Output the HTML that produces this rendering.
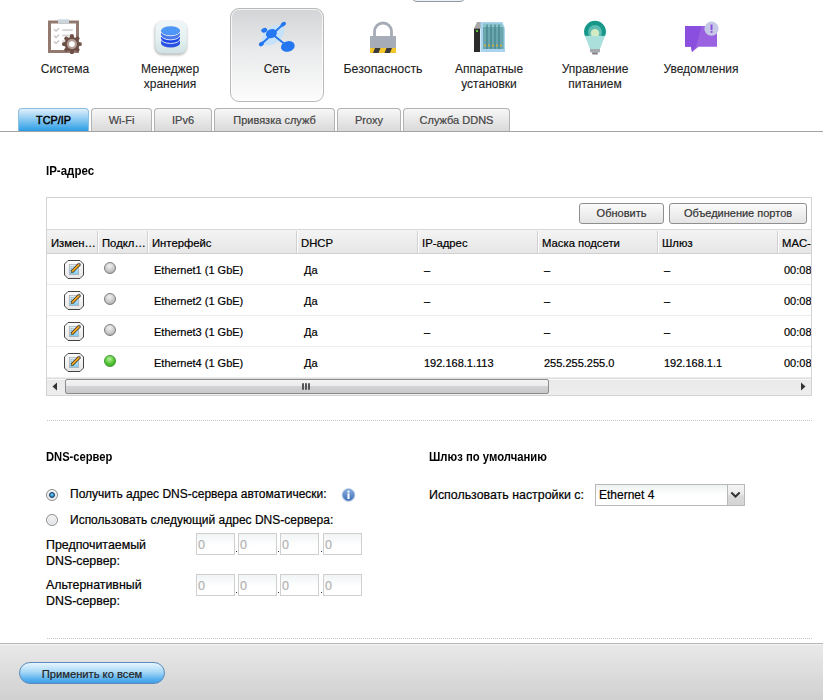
<!DOCTYPE html>
<html><head><meta charset="utf-8">
<style>
*{box-sizing:border-box;margin:0;padding:0}
html,body{width:823px;height:700px;overflow:hidden;background:#fff}
body{position:relative;font-family:"Liberation Sans",sans-serif;color:#000;-webkit-text-stroke:0.2px currentColor}
.a{position:absolute}
.lbl{position:absolute;font-size:12px;line-height:15px;text-align:center;color:#222;white-space:nowrap;-webkit-text-stroke:0.1px currentColor}
.card{position:absolute;left:230px;top:8px;width:94px;height:94px;border:1px solid #b9b9b9;border-radius:9px;background:linear-gradient(#d3d4d7,#e9eaeb 45%,#fcfcfc);box-shadow:inset 0 0 0 1px rgba(255,255,255,.75)}
.topbtn{position:absolute;left:411px;top:-20px;width:55px;height:22px;border:1px solid #8f9ba6;border-radius:6px;background:#eef1f4}
.tabline{position:absolute;left:0;top:131px;width:823px;height:1px;background:#a3a3a3}
.tab{position:absolute;top:108px;height:23px;border:1px solid #b3b3b3;border-bottom:none;border-radius:4px 4px 0 0;background:linear-gradient(#f7f7f7,#d9d9d9);font-size:11px;line-height:22px;text-align:center;color:#444}
.tab.on{background:linear-gradient(#dff0fb,#2b9de6);border-color:#8fbfe0;color:#000;font-size:10.8px;-webkit-text-stroke:0.45px #000}
.h{position:absolute;font-size:11.5px;font-weight:bold;color:#000;white-space:nowrap;transform:scaleY(1.14);transform-origin:0 85%;-webkit-text-stroke:0}
.grid{position:absolute;left:46px;top:197px;width:766px;height:199px;border:1px solid #d3d3d3;overflow:hidden}
.btn{position:absolute;top:5px;height:21px;border:1px solid #8f8f8f;border-radius:3px;background:linear-gradient(#fbfbfb,#e4e4e4);font-size:11px;line-height:19px;text-align:center;color:#333}
.hdr{position:absolute;left:0;top:31px;width:900px;height:25px;background:linear-gradient(#f4f4f4,#e6e6e6);border-top:1px solid #d8d8d8;border-bottom:1px solid #d0d0d0}
.hc{position:absolute;top:1px;height:22px;font-size:11.3px;line-height:24px;color:#000;padding-left:4px;white-space:nowrap;overflow:hidden;border-right:1px solid #d0d0d0;box-shadow:1px 0 0 #fff}
.row{position:absolute;left:0;width:900px;height:31px;border-bottom:1px solid #ececec}
.c{position:absolute;top:0;font-size:11px;line-height:32px;color:#000;white-space:nowrap}
.edit{position:absolute;left:17px;top:6px}
.dot{position:absolute;left:57px;top:8px;width:12px;height:12px;border-radius:50%;border:1px solid #7d7d7d;background:radial-gradient(circle at 45% 30%,#f2f2f2,#c9c9c9 55%,#9a9a9a 100%)}
.dot.g{border-color:#3a9a2a;background:radial-gradient(circle at 45% 30%,#b5f29a,#52c234 55%,#2e9a1e 100%)}
.dotted{position:absolute;left:47px;width:765px;height:1px;border-top:1px dotted #c4c4c4}
.txt{position:absolute;font-size:12px;color:#000;white-space:nowrap}
.radio{position:absolute;left:46px;width:12px;height:12px;border-radius:50%;border:1px solid #8a8a8a;box-shadow:inset 0 0 0 1px #fdfdfd;background:radial-gradient(circle at 50% 35%,#f4f4f5,#d3d5d9)}
.ipb{position:absolute;width:39px;height:22px;border:1px solid #cfcfcf;background:linear-gradient(#f1f4f5,#fff 60%);font-size:12.5px;line-height:22px;padding-left:1px;color:#b3b3b3}
.ipdot{position:absolute;width:1px;height:1px;background:#333}
.footer{position:absolute;left:0;top:643px;width:823px;height:57px;border-top:1px solid #b5b5b5;box-shadow:inset 0 1px 0 #f4f4f4;background:linear-gradient(#e9e9e9,#d0d0d0)}
.apply{position:absolute;left:19px;top:662px;width:146px;height:22px;border:1px solid #5a8bbd;border-radius:11px;background:linear-gradient(#e8f6fe,#a6d8f6 45%,#5ab2ee 80%,#3f9fe6);font-size:11.2px;line-height:22px;text-align:center;color:#222}
</style></head><body>

<div class="topbtn"></div>
<div class="card"></div>

<!-- Система -->
<svg class="a" style="left:44px;top:16px" width="42" height="40" viewBox="0 0 42 40">
  <rect x="5.5" y="6" width="28" height="29.5" fill="#fff" stroke="#937a70" stroke-width="3"/>
  <rect x="14" y="3.3" width="11" height="4.2" fill="#c9d6dd"/>
  <path d="M10 13.2l2 2 3-3M10 19.7l2 2 3-3M10 25.5l2 2 3-3" stroke="#bdbdbd" stroke-width="1.2" fill="none"/>
  <rect x="18.3" y="13.1" width="10.5" height="2" fill="#d6d6d6"/><rect x="18.3" y="18.5" width="10.5" height="2" fill="#d6d6d6"/><rect x="18.3" y="24.3" width="4" height="2" fill="#d6d6d6"/>
  <g transform="translate(27.9,28.1)">
    <path d="M-2.41 -6.36 L-1.46 -9.79 L1.46 -9.79 L2.41 -6.36 L2.79 -6.20 L5.89 -7.96 L7.96 -5.89 L6.20 -2.79 L6.36 -2.41 L9.79 -1.46 L9.79 1.46 L6.36 2.41 L6.20 2.79 L7.96 5.89 L5.89 7.96 L2.79 6.20 L2.41 6.36 L1.46 9.79 L-1.46 9.79 L-2.41 6.36 L-2.79 6.20 L-5.89 7.96 L-7.96 5.89 L-6.20 2.79 L-6.36 2.41 L-9.79 1.46 L-9.79 -1.46 L-6.36 -2.41 L-6.20 -2.79 L-7.96 -5.89 L-5.89 -7.96 L-2.79 -6.20Z" fill="#6d4f46"/>
    <circle r="6.9" fill="#6d4f46"/>
    <circle r="5.1" fill="#b5a098"/><circle r="2.9" fill="#fff"/>
  </g>
</svg>

<!-- Менеджер хранения -->
<svg class="a" style="left:150px;top:18px" width="42" height="42" viewBox="0 0 42 42">
  <defs><linearGradient id="sq" x1="0" y1="0" x2="0" y2="1"><stop offset="0" stop-color="#f1f7f9"/><stop offset="0.6" stop-color="#e3eff1"/><stop offset="1" stop-color="#cfe1e4"/></linearGradient>
  <filter id="bl" x="-20%" y="-20%" width="140%" height="140%"><feGaussianBlur stdDeviation="0.9"/></filter></defs>
  <rect x="4.5" y="3.8" width="32.5" height="33.5" rx="8" fill="#b9b9b9" filter="url(#bl)"/>
  <rect x="5.3" y="3.1" width="31.5" height="32.5" rx="7.5" fill="url(#sq)"/>
  <g transform="translate(2,2)">
  <path d="M9.1 10.5V23.15a9.45 4.35 0 0 0 18.9 0V10.5z" fill="#2b53e2"/>
  <path d="M9.1 10.5V18.95a9.45 4.35 0 0 0 18.9 0V10.5z" fill="#1b47e6"/>
  <path d="M9.1 10.5V15.35a9.45 4.35 0 0 0 18.9 0V10.5z" fill="#4b79e8"/>
  <path d="M9.1 11.4a9.45 4.35 0 0 0 18.9 0M9.1 15.5a9.45 4.35 0 0 0 18.9 0M9.1 19.1a9.45 4.35 0 0 0 18.9 0" stroke="#eef3fc" stroke-width="0.9" fill="none"/>
  <ellipse cx="18.55" cy="10.55" rx="9.45" ry="4.35" fill="#4e97f7"/>
  </g>
</svg>

<!-- Сеть -->
<svg class="a" style="left:250px;top:15px" width="50" height="45" viewBox="0 0 50 45">
  <ellipse cx="23.1" cy="20.1" rx="13" ry="8" transform="rotate(-40 23.1 20.1)" fill="#c6e2fb"/>
  <path d="M11.4 29L33.3 9.2M21.4 18.6L37.8 31.4" stroke="#2477f0" stroke-width="1.9" fill="none"/>
  <ellipse cx="21.4" cy="18.6" rx="5.6" ry="4.4" transform="rotate(-20 21.4 18.6)" fill="#2477f0"/>
  <ellipse cx="14.2" cy="15.3" rx="3" ry="2.3" transform="rotate(-20 14.2 15.3)" fill="#2477f0"/>
  <ellipse cx="33.3" cy="9.2" rx="3" ry="2" transform="rotate(-35 33.3 9.2)" fill="#2477f0"/>
  <ellipse cx="11.4" cy="29" rx="2.8" ry="2" transform="rotate(-35 11.4 29)" fill="#2477f0"/>
  <ellipse cx="37.8" cy="31.4" rx="7" ry="5.2" transform="rotate(-15 37.8 31.4)" fill="#2477f0"/>
</svg>

<!-- Безопасность -->
<svg class="a" style="left:368px;top:20px" width="30" height="35" viewBox="0 0 30 35">
  <path d="M6.5 16.5V11.5a8.5 8.5 0 0 1 17 0v5" stroke="#a6acb6" stroke-width="2.8" fill="none"/>
  <rect x="2" y="16" width="26" height="12" fill="#a7adb8"/>
  <rect x="2" y="28" width="26" height="5" fill="#f3c72b"/>
  <path d="M5 33l2-5h5.5l-2 5zM16.5 33l2-5h5.5l-2 5z" fill="#3a3a3a"/>
</svg>

<!-- Аппаратные установки -->
<svg class="a" style="left:473px;top:21px" width="33" height="32" viewBox="0 0 33 32">
  <path d="M1 7.5L4 1h4v6.5z" fill="#a8a8a8"/>
  <rect x="1" y="7.5" width="6" height="23.5" fill="#2b2b2b"/>
  <circle cx="4" cy="10" r="1" fill="#6df53b"/>
  <path d="M7.5 1h22l2.5 6.5v23.5H7.5z" fill="#a9d3ee"/>
  <path d="M10 2.5h19l1.5 4.5V28H10z" fill="#8cc4cc"/>
  <rect x="10" y="6" width="20.5" height="22" fill="#6aa6ad"/>
  <path d="M14 3.5v24.5M18 3.5v24.5M22 3.5v24.5M26 3.5v24.5" stroke="#3f7c84" stroke-width="1.1"/>
  <g fill="#e6b52c"><circle cx="12" cy="24.5" r="0.9"/><circle cx="16" cy="24.5" r="0.9"/><circle cx="20" cy="24.5" r="0.9"/><circle cx="24" cy="24.5" r="0.9"/><circle cx="28" cy="24.5" r="0.9"/></g>
</svg>

<!-- Управление питанием -->
<svg class="a" style="left:583px;top:20px" width="24" height="36" viewBox="0 0 24 36">
  <circle cx="12" cy="11.7" r="10.9" fill="#16978a"/>
  <circle cx="12" cy="11.9" r="7" fill="#5dbcb2"/>
  <circle cx="12" cy="13.3" r="4.2" fill="#d3ebc2"/>
  <path d="M0 15.9h24v8H0z" fill="#fff"/>
  <path d="M2 15.9h20l-5 13.1H7z" fill="#abdfdb"/>
  <rect x="7" y="29" width="10" height="3.3" fill="#a5a9ae"/>
  <rect x="9" y="32.3" width="6" height="2.3" rx="1" fill="#7f858b"/>
</svg>

<!-- Уведомления -->
<svg class="a" style="left:684px;top:20px" width="36" height="34" viewBox="0 0 36 34">
  <path d="M1 6h32v20.8H14.5L8 32l-1-5.2H1z" fill="#9a62e0"/>
  <path d="M1 6h16.5l-5.5 20.8L8 32l-1-5.2H1z" fill="#8a4fde"/>
  <circle cx="27.5" cy="8.7" r="7.1" fill="#c6c9e6"/>
  <rect x="26.6" y="4.5" width="1.9" height="5.5" fill="#8a4fde"/>
  <rect x="26.6" y="11" width="1.9" height="1.8" fill="#8a4fde"/>
</svg>

<div class="lbl" style="left:15px;top:62px;width:100px">Система</div>
<div class="lbl" style="left:120px;top:62px;width:100px">Менеджер<br>хранения</div>
<div class="lbl" style="left:227px;top:62px;width:100px">Сеть</div>
<div class="lbl" style="left:333px;top:62px;width:100px;font-size:12.4px">Безопасность</div>
<div class="lbl" style="left:439px;top:62px;width:100px">Аппаратные<br>установки</div>
<div class="lbl" style="left:545px;top:62px;width:100px">Управление<br>питанием</div>
<div class="lbl" style="left:651px;top:62px;width:100px">Уведомления</div>

<!-- tabs -->
<div class="tabline"></div>
<div class="tab on" style="left:18px;width:71px">TCP/IP</div>
<div class="tab" style="left:91px;width:61px">Wi-Fi</div>
<div class="tab" style="left:154px;width:58px">IPv6</div>
<div class="tab" style="left:214px;width:121px">Привязка служб</div>
<div class="tab" style="left:337px;width:64px">Proxy</div>
<div class="tab" style="left:403px;width:107px">Служба DDNS</div>

<div class="h" style="left:46px;top:165px">IP-адрес</div>

<div class="grid">
  <div class="btn" style="left:532px;width:85px">Обновить</div>
  <div class="btn" style="left:622px;width:138px">Объединение портов</div>
  <div class="hdr">
    <div class="hc" style="left:0;width:51px">Измен…</div>
    <div class="hc" style="left:51px;width:50px">Подкл…</div>
    <div class="hc" style="left:101px;width:149px">Интерфейс</div>
    <div class="hc" style="left:250px;width:121px">DHCP</div>
    <div class="hc" style="left:371px;width:120px">IP-адрес</div>
    <div class="hc" style="left:491px;width:120px">Маска подсети</div>
    <div class="hc" style="left:611px;width:120px">Шлюз</div>
    <div class="hc" style="left:731px;width:120px">MAC-адрес</div>
  </div>
  <div class="row" style="top:56px"><svg class="edit" width="20" height="19" viewBox="0 0 20 19"><defs><linearGradient id="eg0" x1="0" y1="0" x2="0" y2="1"><stop offset="0" stop-color="#fdfdfd"/><stop offset="1" stop-color="#e6e6e6"/></linearGradient><linearGradient id="bq0" x1="0" y1="0" x2="0" y2="1"><stop offset="0" stop-color="#e2f2fb"/><stop offset="1" stop-color="#7ccbf2"/></linearGradient></defs><path d="M4 0.5H16L19.5 4V15L16 18.5H4L0.5 15V4Z" fill="url(#eg0)" stroke="#444" stroke-width="1"/><rect x="5.3" y="4.6" width="9.4" height="10" fill="url(#bq0)" stroke="#a9a9a9" stroke-width="0.7"/><g fill="#999"><rect x="6.8" y="6.2" width="1" height="1"/><rect x="8.6" y="6.2" width="1" height="1"/><rect x="6.8" y="8.2" width="1" height="1"/></g><path d="M7.8 11.8L15.6 4" stroke="#222" stroke-width="3.2"/><path d="M7.8 11.8L15.6 4" stroke="#f7a820" stroke-width="1.9"/><path d="M15 4.6l1.3-1.3" stroke="#777" stroke-width="2.6"/><path d="M6.6 13.2l0.9-2.2 1.4 1.3z" fill="#6a5020"/></svg><div class="dot"></div><div class="c" style="left:107px">Ethernet1 (1 GbE)</div><div class="c" style="left:257px">Да</div><div class="c" style="left:377px">–</div><div class="c" style="left:497px">–</div><div class="c" style="left:617px">–</div><div class="c" style="left:737px">00:08:9B:00:00:01</div></div>
  <div class="row" style="top:87px"><svg class="edit" width="20" height="19" viewBox="0 0 20 19"><defs><linearGradient id="eg1" x1="0" y1="0" x2="0" y2="1"><stop offset="0" stop-color="#fdfdfd"/><stop offset="1" stop-color="#e6e6e6"/></linearGradient><linearGradient id="bq1" x1="0" y1="0" x2="0" y2="1"><stop offset="0" stop-color="#e2f2fb"/><stop offset="1" stop-color="#7ccbf2"/></linearGradient></defs><path d="M4 0.5H16L19.5 4V15L16 18.5H4L0.5 15V4Z" fill="url(#eg1)" stroke="#444" stroke-width="1"/><rect x="5.3" y="4.6" width="9.4" height="10" fill="url(#bq1)" stroke="#a9a9a9" stroke-width="0.7"/><g fill="#999"><rect x="6.8" y="6.2" width="1" height="1"/><rect x="8.6" y="6.2" width="1" height="1"/><rect x="6.8" y="8.2" width="1" height="1"/></g><path d="M7.8 11.8L15.6 4" stroke="#222" stroke-width="3.2"/><path d="M7.8 11.8L15.6 4" stroke="#f7a820" stroke-width="1.9"/><path d="M15 4.6l1.3-1.3" stroke="#777" stroke-width="2.6"/><path d="M6.6 13.2l0.9-2.2 1.4 1.3z" fill="#6a5020"/></svg><div class="dot"></div><div class="c" style="left:107px">Ethernet2 (1 GbE)</div><div class="c" style="left:257px">Да</div><div class="c" style="left:377px">–</div><div class="c" style="left:497px">–</div><div class="c" style="left:617px">–</div><div class="c" style="left:737px">00:08:9B:00:00:02</div></div>
  <div class="row" style="top:118px"><svg class="edit" width="20" height="19" viewBox="0 0 20 19"><defs><linearGradient id="eg2" x1="0" y1="0" x2="0" y2="1"><stop offset="0" stop-color="#fdfdfd"/><stop offset="1" stop-color="#e6e6e6"/></linearGradient><linearGradient id="bq2" x1="0" y1="0" x2="0" y2="1"><stop offset="0" stop-color="#e2f2fb"/><stop offset="1" stop-color="#7ccbf2"/></linearGradient></defs><path d="M4 0.5H16L19.5 4V15L16 18.5H4L0.5 15V4Z" fill="url(#eg2)" stroke="#444" stroke-width="1"/><rect x="5.3" y="4.6" width="9.4" height="10" fill="url(#bq2)" stroke="#a9a9a9" stroke-width="0.7"/><g fill="#999"><rect x="6.8" y="6.2" width="1" height="1"/><rect x="8.6" y="6.2" width="1" height="1"/><rect x="6.8" y="8.2" width="1" height="1"/></g><path d="M7.8 11.8L15.6 4" stroke="#222" stroke-width="3.2"/><path d="M7.8 11.8L15.6 4" stroke="#f7a820" stroke-width="1.9"/><path d="M15 4.6l1.3-1.3" stroke="#777" stroke-width="2.6"/><path d="M6.6 13.2l0.9-2.2 1.4 1.3z" fill="#6a5020"/></svg><div class="dot"></div><div class="c" style="left:107px">Ethernet3 (1 GbE)</div><div class="c" style="left:257px">Да</div><div class="c" style="left:377px">–</div><div class="c" style="left:497px">–</div><div class="c" style="left:617px">–</div><div class="c" style="left:737px">00:08:9B:00:00:03</div></div>
  <div class="row" style="top:149px"><svg class="edit" width="20" height="19" viewBox="0 0 20 19"><defs><linearGradient id="eg3" x1="0" y1="0" x2="0" y2="1"><stop offset="0" stop-color="#fdfdfd"/><stop offset="1" stop-color="#e6e6e6"/></linearGradient><linearGradient id="bq3" x1="0" y1="0" x2="0" y2="1"><stop offset="0" stop-color="#e2f2fb"/><stop offset="1" stop-color="#7ccbf2"/></linearGradient></defs><path d="M4 0.5H16L19.5 4V15L16 18.5H4L0.5 15V4Z" fill="url(#eg3)" stroke="#444" stroke-width="1"/><rect x="5.3" y="4.6" width="9.4" height="10" fill="url(#bq3)" stroke="#a9a9a9" stroke-width="0.7"/><g fill="#999"><rect x="6.8" y="6.2" width="1" height="1"/><rect x="8.6" y="6.2" width="1" height="1"/><rect x="6.8" y="8.2" width="1" height="1"/></g><path d="M7.8 11.8L15.6 4" stroke="#222" stroke-width="3.2"/><path d="M7.8 11.8L15.6 4" stroke="#f7a820" stroke-width="1.9"/><path d="M15 4.6l1.3-1.3" stroke="#777" stroke-width="2.6"/><path d="M6.6 13.2l0.9-2.2 1.4 1.3z" fill="#6a5020"/></svg><div class="dot g"></div><div class="c" style="left:107px">Ethernet4 (1 GbE)</div><div class="c" style="left:257px">Да</div><div class="c" style="left:377px">192.168.1.113</div><div class="c" style="left:497px">255.255.255.0</div><div class="c" style="left:617px">192.168.1.1</div><div class="c" style="left:737px">00:08:9B:00:00:04</div></div>
  <div class="a" style="left:0;top:180px;width:766px;height:18px;background:linear-gradient(#e9e9e9,#eeeeee);border-top:1px solid #dedede;box-shadow:inset 0 1px 0 #f8f8f8"></div>
  <svg class="a" style="left:5px;top:184px" width="6" height="9" viewBox="0 0 6 9"><path d="M5 0.5v8L0.5 4.5z" fill="#333"/></svg>
  <div class="a" style="left:18px;top:181px;width:484px;height:15px;border:1px solid #8c8c8c;border-radius:2px;background:linear-gradient(#f3f3f3,#ececec 45%,#d3d3d6 50%,#c9c9cc)"></div>
  <div class="a" style="left:255px;top:185px;width:2px;height:7px;background:#555;border-radius:1px"></div>
  <div class="a" style="left:258px;top:185px;width:2px;height:7px;background:#555;border-radius:1px"></div>
  <div class="a" style="left:261px;top:185px;width:2px;height:7px;background:#555;border-radius:1px"></div>
  <svg class="a" style="left:753px;top:184px" width="6" height="9" viewBox="0 0 6 9"><path d="M1 0.5v8L5.5 4.5z" fill="#333"/></svg>
</div>

<div class="dotted" style="top:420px"></div>

<div class="h" style="left:46px;top:451px;font-size:11.2px">DNS-сервер</div>
<div class="h" style="left:429px;top:451px;font-size:11.3px">Шлюз по умолчанию</div>

<div class="radio" style="top:489px"></div>
<div class="a" style="left:49px;top:492px;width:6px;height:6px;border-radius:50%;border:1px solid #143a62;background:radial-gradient(circle at 50% 40%,#7ad6f8 0,#2a90d0 60%,#1a5c98 100%)"></div>
<div class="txt" style="left:70px;top:487px">Получить адрес DNS-сервера автоматически:</div>
<svg class="a" style="left:341px;top:487px" width="16" height="16" viewBox="0 0 16 16"><defs><linearGradient id="ig" x1="0" y1="0" x2="0" y2="1"><stop offset="0" stop-color="#86ade0"/><stop offset="1" stop-color="#3f6fb6"/></linearGradient></defs><circle cx="7.5" cy="8" r="6.9" fill="#cddcee"/><circle cx="7.5" cy="8" r="5.7" fill="url(#ig)"/><circle cx="7.5" cy="8" r="5.7" fill="none" stroke="#5b86c4" stroke-width="0.6"/><rect x="6.5" y="3.6" width="2" height="2" fill="#fff"/><rect x="6.5" y="6.4" width="2" height="5.6" fill="#fff"/></svg>
<div class="radio" style="top:514px"></div>
<div class="txt" style="left:70px;top:513px">Использовать следующий адрес DNS-сервера:</div>

<div class="txt" style="left:46px;top:537px;line-height:16px;font-size:12.4px">Предпочитаемый<br>DNS-сервер:</div>
<div class="txt" style="left:46px;top:577px;line-height:16px;font-size:12.4px">Альтернативный<br>DNS-сервер:</div>

<div class="ipb" style="left:196px;top:533px">0</div>
<div class="ipdot" style="left:236px;top:551px"></div>
<div class="ipb" style="left:238px;top:533px">0</div>
<div class="ipdot" style="left:278px;top:551px"></div>
<div class="ipb" style="left:280px;top:533px">0</div>
<div class="ipdot" style="left:321px;top:551px"></div>
<div class="ipb" style="left:323px;top:533px">0</div>
<div class="ipb" style="left:196px;top:574px">0</div>
<div class="ipdot" style="left:236px;top:592px"></div>
<div class="ipb" style="left:238px;top:574px">0</div>
<div class="ipdot" style="left:278px;top:592px"></div>
<div class="ipb" style="left:280px;top:574px">0</div>
<div class="ipdot" style="left:321px;top:592px"></div>
<div class="ipb" style="left:323px;top:574px">0</div>

<div class="txt" style="left:429px;top:488px;font-size:12.4px">Использовать настройки с:</div>
<div class="a" style="left:595px;top:484px;width:150px;height:22px;border:1px solid #b8b8b8;background:linear-gradient(#eef2f3,#fff 50%)"></div>
<div class="a" style="left:727px;top:485px;width:17px;height:20px;border-left:1px solid #b8b8b8;background:linear-gradient(#f4f4f4,#ebebeb 45%,#d9d9d9 55%,#d4d4d4)"></div>
<svg class="a" style="left:730px;top:491px" width="11" height="7" viewBox="0 0 11 7"><path d="M1.3 1.5l4.2 4L9.7 1.5" stroke="#333" stroke-width="2" fill="none"/></svg>
<div class="txt" style="left:599px;top:488px">Ethernet 4</div>

<div class="dotted" style="top:638px"></div>

<div class="footer"></div>
<div class="apply">Применить ко всем</div>

</body></html>
